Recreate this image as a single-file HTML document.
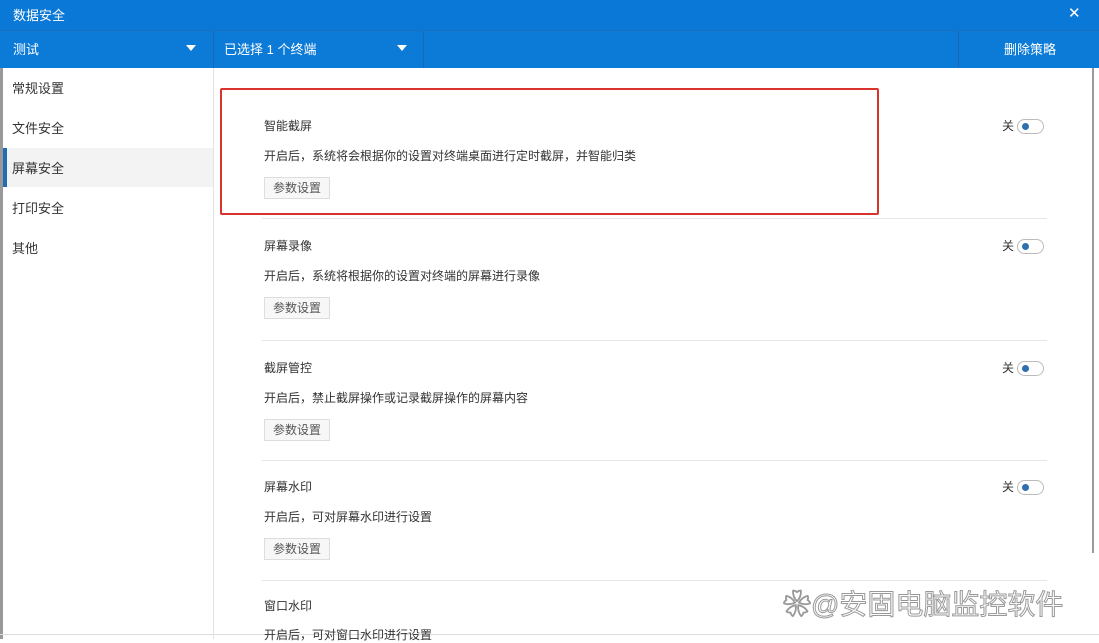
<!DOCTYPE html>
<html><head><meta charset="utf-8"><style>
body{margin:0;width:1099px;height:639px;overflow:hidden;background:#fff;font-family:"Liberation Sans","Noto Sans CJK SC",sans-serif;position:relative}
.a{position:absolute}
.t{font-size:12px;color:#333;white-space:nowrap}
.btn{position:absolute;left:264px;width:66px;height:22px;border:1px solid #ddd;background:#f7f7f7;font-size:12px;color:#555;text-align:center;line-height:20px;box-sizing:border-box}
.sw{position:absolute;left:1017px;width:27px;height:15px;border:1px solid #bbb;border-radius:8px;box-sizing:border-box;background:#fff}
.sw:before{content:"";position:absolute;left:4px;top:3px;width:7px;height:7px;border-radius:50%;background:#2f6fb0}
.off{position:absolute;left:1002px;font-size:12px;color:#333}
.sep{position:absolute;left:262px;width:785px;height:1px;background:#e6e6e6}
</style></head><body>
<div class="a" style="left:0;top:0;width:1099px;height:30px;background:#0a78d6"></div>
<div class="a t" style="left:13px;top:5px;color:#fff;font-size:13px">数据安全</div>
<div class="a" style="left:1068px;top:4px;color:#fff;font-size:15px">✕</div>
<div class="a" style="left:0;top:30px;width:1099px;height:38px;background:#0c7bd8"></div>
<div class="a" style="left:0;top:30px;width:1099px;height:1px;background:#1a6fbf"></div>
<div class="a" style="left:213px;top:31px;width:1px;height:37px;background:#1a68b5"></div>
<div class="a" style="left:423px;top:31px;width:1px;height:37px;background:#1a68b5"></div>
<div class="a" style="left:958px;top:31px;width:1px;height:37px;background:#1a68b5"></div>
<div class="a t" style="left:13px;top:39px;color:#fff;font-size:13px">测试</div>
<div class="a" style="left:186px;top:45px;border:5px solid transparent;border-top:6px solid #fff"></div>
<div class="a t" style="left:224px;top:39px;color:#fff;font-size:13px">已选择 1 个终端</div>
<div class="a" style="left:397px;top:45px;border:5px solid transparent;border-top:6px solid #fff"></div>
<div class="a t" style="left:1004px;top:39px;color:#fff;font-size:13px">删除策略</div>
<div class="a" style="left:0;top:68px;width:3px;height:571px;background:#999"></div>
<div class="a" style="left:213px;top:68px;width:1px;height:571px;background:#e3e3e3"></div>
<div class="a" style="left:3px;top:148px;width:210px;height:39px;background:#f3f3f3"></div>
<div class="a" style="left:3px;top:148px;width:4px;height:39px;background:#1f6db5"></div>
<div class="a t" style="left:12px;top:78px;font-size:13px">常规设置</div>
<div class="a t" style="left:12px;top:118px;font-size:13px">文件安全</div>
<div class="a t" style="left:12px;top:158px;font-size:13px">屏幕安全</div>
<div class="a t" style="left:12px;top:198px;font-size:13px">打印安全</div>
<div class="a t" style="left:12px;top:238px;font-size:13px">其他</div>
<div class="a" style="left:1092px;top:68px;width:2px;height:485px;background:#9a9a9a"></div>
<div class="a" style="left:0;top:634px;width:1099px;height:1px;background:#ddd"></div>

<div class="a t" style="left:264px;top:117px">智能截屏</div>
<div class="a t" style="left:264px;top:147px">开启后，系统将会根据你的设置对终端桌面进行定时截屏，并智能归类</div>
<div class="btn" style="top:177px">参数设置</div>
<div class="off" style="top:117px">关</div><div class="sw" style="top:119px"></div>
<div class="sep" style="top:218px"></div>

<div class="a t" style="left:264px;top:237px">屏幕录像</div>
<div class="a t" style="left:264px;top:267px">开启后，系统将根据你的设置对终端的屏幕进行录像</div>
<div class="btn" style="top:297px">参数设置</div>
<div class="off" style="top:237px">关</div><div class="sw" style="top:239px"></div>
<div class="sep" style="top:340px"></div>

<div class="a t" style="left:264px;top:359px">截屏管控</div>
<div class="a t" style="left:264px;top:389px">开启后，禁止截屏操作或记录截屏操作的屏幕内容</div>
<div class="btn" style="top:419px">参数设置</div>
<div class="off" style="top:359px">关</div><div class="sw" style="top:361px"></div>
<div class="sep" style="top:460px"></div>

<div class="a t" style="left:264px;top:478px">屏幕水印</div>
<div class="a t" style="left:264px;top:508px">开启后，可对屏幕水印进行设置</div>
<div class="btn" style="top:538px">参数设置</div>
<div class="off" style="top:478px">关</div><div class="sw" style="top:480px"></div>
<div class="sep" style="top:580px"></div>

<div class="a t" style="left:264px;top:597px">窗口水印</div>
<div class="a t" style="left:264px;top:626px">开启后，可对窗口水印进行设置</div>

<div class="a" style="left:220px;top:88px;width:655px;height:123px;border:2px solid #d9342b;border-radius:2px"></div>
<div class="a" style="left:783px;top:583px;font-size:28px;color:#fff;-webkit-text-stroke:1px #999;white-space:nowrap">❀@安固电脑监控软件</div>
</body></html>
